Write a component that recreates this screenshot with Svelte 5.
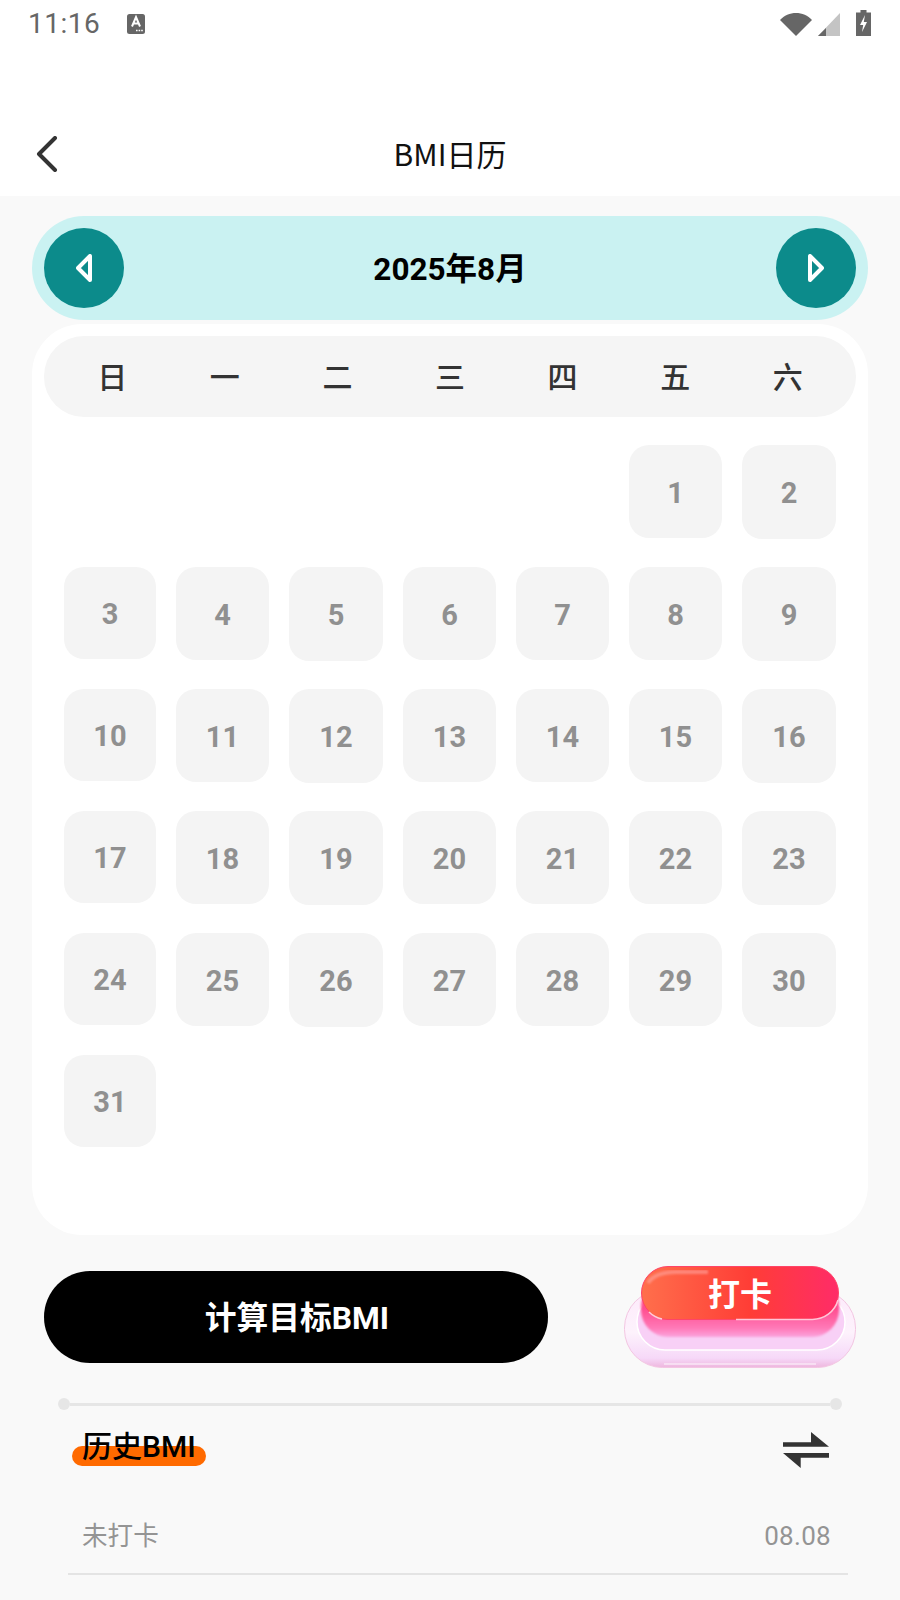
<script>
	const weekdays = ["日", "一", "二", "三", "四", "五", "六"];
	// August 2025 starts on a Friday
	const blanks = Array(5);
	const days = Array.from({ length: 31 }, (_, i) => i + 1);
</script>

<div class="page">
	<header>
		<div class="status">
			<span class="time">11:16</span>
			<svg class="a-icon" width="20" height="22" viewBox="0 0 20 22">
				<rect x="1" y="1" width="18" height="20" rx="2.5" fill="#666" />
				<path d="M6 13.5 10 4l4 9.5M7.4 10.5h5.2" fill="none" stroke="#fff" stroke-width="2" />
				<path d="M10 17.5h1.6M12.6 17.5h1.6M15.2 17.5h1.6" stroke="#fff" stroke-width="1.6" />
			</svg>
			<div class="status-right">
				<svg width="32" height="24" viewBox="0 0 32 24">
					<path d="M0 8C4 3.5 10 1 16 1s12 2.500 16 7L16 24Z" fill="#666" />
				</svg>
				<svg width="22" height="24" viewBox="0 0 22 24">
					<path d="M22 1v23H0Z" fill="#c4c4c4" />
					<path d="M8 16v8H0Z" fill="#666" />
				</svg>
				<svg width="15" height="26" viewBox="0 0 15 26">
					<path d="M4.500 0h6v2.500H15V26H0V2.500h4.500Z" fill="#666" />
					<path d="M9 5 4 15h3.200L6 22l5-10H7.800Z" fill="#fff" />
				</svg>
			</div>
		</div>
		<div class="nav">
			<svg class="back" width="24" height="36" viewBox="0 0 24 36">
				<path d="M20 2 4 18l16 16" fill="none" stroke="#333" stroke-width="4" stroke-linecap="round" stroke-linejoin="round" />
			</svg>
			<span class="nav-title">BMI日历</span>
		</div>
	</header>

	<main>
		<div class="month-bar">
			<button class="round" aria-label="上个月">
				<svg width="16" height="28" viewBox="0 0 16 28">
					<path d="M14 2v24L2 14Z" fill="none" stroke="#fff" stroke-width="4" stroke-linejoin="round" />
				</svg>
			</button>
			<span class="month">2025年8月</span>
			<button class="round" aria-label="下个月">
				<svg width="16" height="28" viewBox="0 0 16 28">
					<path d="M2 2v24l12-12Z" fill="none" stroke="#fff" stroke-width="4" stroke-linejoin="round" />
				</svg>
			</button>
		</div>

		<section class="calendar">
			<div class="week">
				{#each weekdays as w}
					<span>{w}</span>
				{/each}
			</div>
			<div class="days">
				{#each blanks as _}
					<span></span>
				{/each}
				{#each days as d}
					<div class="day">{d}</div>
				{/each}
			</div>
		</section>

		<div class="actions">
			<button class="calc">计算目标BMI</button>
			<button class="punch">
				<svg width="232" height="102" viewBox="0 0 232 102">
					<defs>
						<linearGradient id="top" x1="0" x2="1" y1="0" y2="0">
							<stop offset="0" stop-color="#ff6f4c" />
							<stop offset="0.55" stop-color="#ff3d36" />
							<stop offset="1" stop-color="#ff2c68" />
						</linearGradient>
						<linearGradient id="skirt" x1="0" x2="0" y1="0" y2="1">
							<stop offset="0.5" stop-color="#ff4d8f" />
							<stop offset="0.85" stop-color="#ff7ab8" />
							<stop offset="1" stop-color="#fba4de" />
						</linearGradient>
						<linearGradient id="base" x1="0" x2="0" y1="0" y2="1">
							<stop offset="0" stop-color="#fdeafb" />
							<stop offset="0.55" stop-color="#fdf2fc" />
							<stop offset="0.88" stop-color="#f6d8f8" />
							<stop offset="1" stop-color="#eeb6de" />
						</linearGradient>
						<filter id="soft" x="-5%" y="-10%" width="110%" height="120%">
							<feGaussianBlur stdDeviation="1" />
						</filter>
					</defs>
					<rect x="0.500" y="24" width="231" height="77.500" rx="38" fill="url(#base)" stroke="#f3c6e2" />
					<path d="M40 98H192" stroke="#fff" stroke-width="1.500" opacity="0.6" />
					<rect x="13" y="28" width="208" height="56" rx="28" fill="#f8d0f6" stroke="#fff" stroke-width="1.500" />
					<rect x="17" y="14" width="198" height="57" rx="27" fill="url(#skirt)" filter="url(#soft)" />
					<rect x="17.500" y="0.500" width="197" height="53" rx="26.500" fill="url(#top)" stroke="#ff4468" />
					<path d="M24 17C29 9 38 6 52 6H84" fill="none" stroke="#ffa6a0" stroke-width="4" opacity="0.6" filter="url(#soft)" />
					<path d="M25 46C29 50 33 52 38 53" fill="none" stroke="#ffd0d6" stroke-width="1.500" />
					<path d="M112 53.500H188A26.500 26.500 0 0 0 214 34" fill="none" stroke="#ffc6d8" stroke-width="1.500" />
				</svg>
				<span>打卡</span>
			</button>
		</div>

		<div class="rule">
			<i></i>
			<b></b>
			<i></i>
		</div>

		<div class="history-head">
			<h2>历史BMI</h2>
			<svg width="46" height="36" viewBox="0 0 46 36">
				<path d="M0 10.300H28V0L46 14.700H0Z" fill="#333" />
				<path d="M46 21H0L17.700 36V25.700H46Z" fill="#333" />
			</svg>
		</div>

		<div class="record">
			<span class="state">未打卡</span>
			<span class="date">08.08</span>
		</div>
	</main>
</div>

<style>
	:global(body) {
		background: #f9f9f9;
	}

	.page {
		height: 1600px;
		overflow: hidden;
		font-family: Roboto, "Noto Sans CJK SC", sans-serif;
		background: #f9f9f9;
	}

	header {
		background: #fff;
		height: 196px;
	}

	.status {
		height: 48px;
		display: flex;
		align-items: center;
		padding: 0 29px 0 28px;
		color: #666;
	}

	.time {
		font-size: 28px;
		letter-spacing: 0.5px;
		line-height: 50px;
	}

	.a-icon {
		margin-left: 26px;
	}

	.status-right {
		margin-left: auto;
		display: flex;
		align-items: center;
		gap: 6px;
	}

	.status-right svg:last-child {
		margin-left: 10px;
		margin-top: -2px;
	}

	.nav {
		margin-top: 68px;
		height: 78px;
		display: flex;
		align-items: center;
		justify-content: center;
		position: relative;
	}

	.back {
		position: absolute;
		left: 35px;
		top: 20px;
	}

	.nav-title {
		font-size: 30px;
		line-height: 44px;
		margin-bottom: 4px;
		color: #111;
		font-family: "Noto Sans CJK SC", sans-serif;
	}

	main {
		padding: 20px 32px 0;
	}

	.month-bar {
		height: 104px;
		padding: 12px;
		box-sizing: border-box;
		border-radius: 52px;
		background: #caf2f2;
		display: flex;
		align-items: center;
		justify-content: space-between;
	}

	.round {
		width: 80px;
		height: 80px;
		border: none;
		border-radius: 50%;
		background: #0c8b8b;
		padding: 0;
		display: flex;
		align-items: center;
		justify-content: center;
	}

	.month {
		font-size: 31.5px;
		font-weight: 700;
		line-height: 44px;
		margin-top: 4px;
		color: #000;
	}

	.calendar {
		margin-top: 4px;
		height: 911px;
		box-sizing: border-box;
		padding: 12px;
		border-radius: 50px;
		background: #fff;
	}

	.week {
		height: 81px;
		padding: 0 12px 4px;
		box-sizing: border-box;
		border-radius: 40px;
		background: #f5f5f5;
		display: grid;
		grid-template-columns: repeat(7, 1fr);
		align-items: center;
		justify-items: center;
		font-size: 30px;
		font-weight: 500;
		color: #333;
	}

	.days {
		margin-top: 28px;
		padding: 0 20px;
		display: grid;
		grid-template-columns: 92px 93px 94px 93px 93px 93px 94px;
		column-gap: 20px;
		row-gap: 28px;
		align-items: start;
	}

	.day {
		aspect-ratio: 1;
		box-sizing: border-box;
		padding-top: 2px;
		border-radius: 20px;
		background: #f4f4f4;
		display: flex;
		align-items: center;
		justify-content: center;
		font-size: 29px;
		font-weight: 700;
		color: #909090;
	}

	.actions {
		margin-top: 31px;
		padding: 0 12px;
		display: flex;
		align-items: center;
		justify-content: space-between;
	}

	.calc {
		width: 504px;
		height: 92px;
		padding: 0 0 5px 2px;
		border: none;
		border-radius: 46px;
		background: #000;
		color: #fff;
		font-family: inherit;
		font-size: 31.75px;
		font-weight: 700;
	}

	.punch {
		position: relative;
		width: 232px;
		height: 102px;
		padding: 0;
		border: none;
		background: none;
		color: #fff;
		font-family: inherit;
	}

	.punch svg {
		display: block;
	}

	.punch span {
		position: absolute;
		left: 0;
		right: 0;
		top: 7px;
		font-size: 32px;
		font-weight: 700;
		line-height: 44px;
	}

	.rule {
		margin: 30px 26px 0;
		display: flex;
		align-items: center;
	}

	.rule i {
		width: 12px;
		height: 12px;
		border-radius: 50%;
		background: #e6e6e6;
	}

	.rule b {
		flex: 1;
		height: 3px;
		background: #e6e6e6;
	}

	.history-head {
		margin-top: 18px;
		padding: 0 39px 0 50px;
		height: 44px;
		display: flex;
		align-items: center;
		justify-content: space-between;
	}

	h2 {
		margin: 0 0 6px;
		position: relative;
		z-index: 0;
		font-size: 30px;
		font-weight: 500;
		line-height: 44px;
		color: #000;
	}

	h2::before {
		content: "";
		position: absolute;
		z-index: -1;
		left: -10px;
		right: -10px;
		top: 21px;
		height: 20px;
		border-radius: 10px;
		background: #ff6a00;
	}

	.record {
		margin: 46px 0 0 36px;
		width: 780px;
		box-sizing: border-box;
		height: 57px;
		padding: 0 17px 0 14px;
		border-bottom: 2px solid #e4e4e4;
		display: flex;
		justify-content: space-between;
		font-size: 26px;
		line-height: 36px;
		color: #949494;
	}

	.state {
		font-size: 25.6px;
	}

	.date {
		letter-spacing: 0.3px;
	}
</style>
